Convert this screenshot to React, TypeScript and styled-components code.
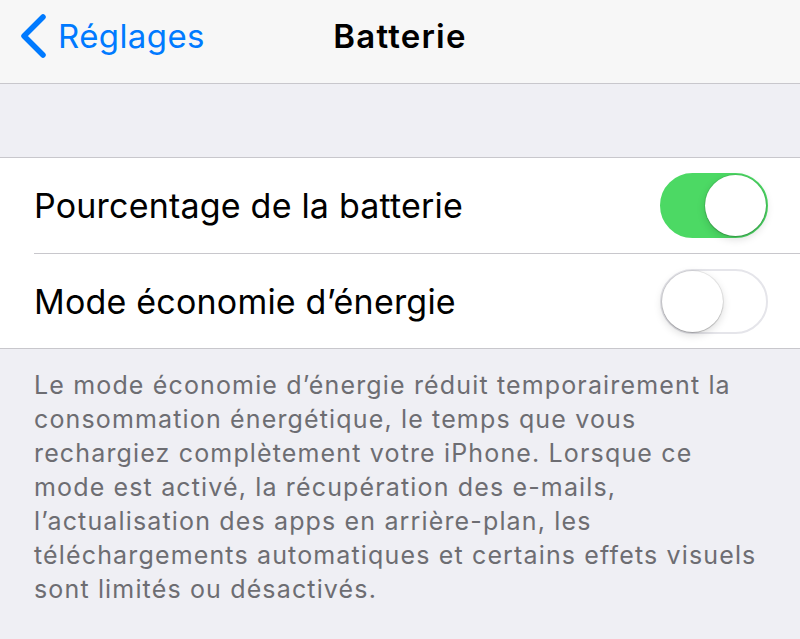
import styled, { createGlobalStyle } from "styled-components";

const GlobalStyle = createGlobalStyle`
	html, body {
		margin: 0;
		padding: 0;
		background: #efeff4;
	}
	body {
		font-family: Inter, "Noto Sans", "Liberation Sans", sans-serif;
		-webkit-font-smoothing: antialiased;
	}
`;

const Screen = styled.div`
	width: 800px;
	height: 639px;
	background: #efeff4;
	overflow: hidden;
`;

const NavBar = styled.header`
	height: 84px;
	background: #f7f7f7;
	border-bottom: 1px solid #c8c7cc;
	display: grid;
	grid-template-columns: 1fr auto 1fr;
	align-items: center;
	padding: 0 20px 11px;
	box-sizing: border-box;
`;

const BackButton = styled.button`
	display: flex;
	align-items: center;
	gap: 11px;
	background: none;
	border: none;
	padding: 0;
	color: #007aff;
	font: inherit;
	font-size: 33px;
	letter-spacing: 0.4px;
	justify-self: start;
	cursor: pointer;
`;

const Title = styled.h1`
	margin: 0;
	font-size: 33px;
	font-weight: 600;
	color: #000;
	letter-spacing: 1.2px;
`;

const Spacer = styled.div`
	height: 73px;
`;

const Group = styled.section`
	background: #fff;
	border-top: 1px solid #c8c7cc;
	border-bottom: 1px solid #c8c7cc;
`;

const Row = styled.div`
	height: 95px;
	display: flex;
	align-items: center;
	justify-content: space-between;
	padding: 0 32px 0 34px;

	& + & {
		border-top: 1px solid #c8c7cc;
		height: 94px;
		margin-left: 34px;
		padding-left: 0;
	}
`;

const Label = styled.span`
	font-size: 34px;
	color: #000;
	letter-spacing: 0.2px;
`;

const Track = styled.div<{ $on: boolean }>`
	width: 108px;
	height: 65px;
	border-radius: 33px;
	box-sizing: border-box;
	background: ${(p) => (p.$on ? "#4cd964" : "#fff")};
	border: 2px solid ${(p) => (p.$on ? "#4cd964" : "#e5e5ea")};
	display: flex;
	align-items: center;
	justify-content: ${(p) => (p.$on ? "flex-end" : "flex-start")};
`;

const Knob = styled.div`
	width: 61px;
	height: 61px;
	border-radius: 50%;
	background: #fff;
	box-shadow: 0 3px 8px rgba(0, 0, 0, 0.15), 0 1px 1px rgba(0, 0, 0, 0.16),
		0 0 0 1px rgba(0, 0, 0, 0.08);
`;

const Footer = styled.p`
	margin: 0;
	padding: 19px 38px 0 34px;
	font-size: 25px;
	line-height: 34px;
	color: #6d6d72;
	letter-spacing: 1.15px;
`;

const Toggle = ({ on }: { on: boolean }) => (
	<Track $on={on}>
		<Knob />
	</Track>
);

const Chevron = () => (
	<svg width="27" height="46" viewBox="0 0 27 46">
		<path
			d="M23 4 L4 23 L23 42"
			fill="none"
			stroke="#007aff"
			strokeWidth="5.5"
			strokeLinecap="round"
			strokeLinejoin="round"
		/>
	</svg>
);

const App = () => (
	<Screen>
		<GlobalStyle />
		<NavBar>
			<BackButton>
				<Chevron />
				Réglages
			</BackButton>
			<Title>Batterie</Title>
			<span />
		</NavBar>
		<Spacer />
		<Group>
			<Row>
				<Label>Pourcentage de la batterie</Label>
				<Toggle on />
			</Row>
			<Row>
				<Label>Mode économie d’énergie</Label>
				<Toggle on={false} />
			</Row>
		</Group>
		<Footer>
			Le mode économie d’énergie réduit temporairement la consommation énergétique, le temps
			que vous rechargiez complètement votre iPhone. Lorsque ce mode est activé, la
			récupération des e-mails, l’actualisation des apps en arrière-plan, les
			téléchargements automatiques et certains effets visuels sont limités ou désactivés.
		</Footer>
	</Screen>
);

export default App;
